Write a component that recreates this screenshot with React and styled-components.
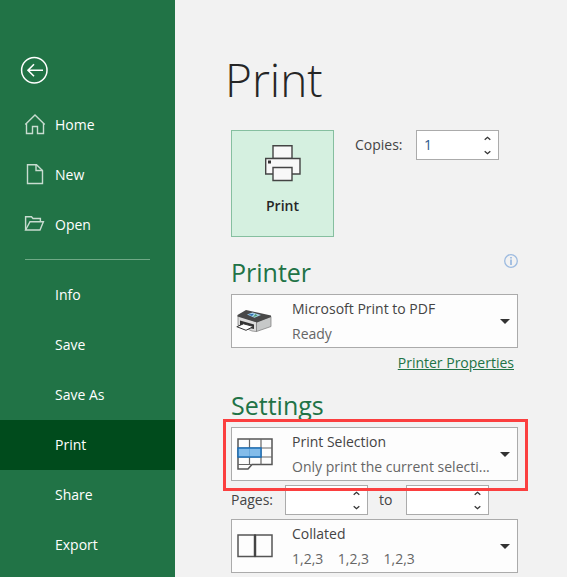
import React, { useState } from 'react';
import styled, { createGlobalStyle } from 'styled-components';

const GlobalStyle = createGlobalStyle`
  * {
    box-sizing: border-box;
  }

  body {
    margin: 0;
    background: #f2f2f2;
    color: #444;
    font-family: 'Segoe UI', 'Open Sans', sans-serif;
    font-size: 14px;
    line-height: 24px;
  }

  button,
  input,
  select {
    font: inherit;
    color: inherit;
  }
`;

const Page = styled.div`
  display: flex;
  min-height: 100vh;
`;

const Sidebar = styled.nav`
  flex: 0 0 175px;
  padding-top: 56px;
  background: #217346;
  color: #fff;
`;

const BackButton = styled.button`
  display: block;
  margin: 0 0 16px 20px;
  padding: 0;
  border: none;
  background: none;
  color: #fff;
  height: 28px;
  cursor: pointer;

  svg {
    display: block;
  }
`;

const NavItem = styled.a`
  display: flex;
  align-items: center;
  height: 50px;
  padding-left: ${({ $plain }) => ($plain ? '55px' : '24px')};
  gap: 9px;
  background: ${({ $active }) => ($active ? '#004b1c' : 'transparent')};
  color: #fff;
  text-decoration: none;
`;

const Divider = styled.hr`
  height: 1px;
  margin: 9px 25px 10px;
  border: none;
  background: #6fa986;
`;

const Main = styled.main`
  flex: 1;
  min-width: 0;
  padding: 44px 49px 4px 56px;
`;

const Title = styled.h1`
  margin: 0 0 16px -6px;
  color: #262626;
  font-size: 46px;
  font-weight: 300;
  line-height: 70px;
`;

const PrintRow = styled.div`
  display: flex;
  align-items: flex-start;
`;

const PrintButton = styled.button`
  display: flex;
  flex-direction: column;
  align-items: center;
  gap: 12px;
  width: 103px;
  height: 107px;
  margin-right: 21px;
  padding: 14px 0 0;
  border: 1px solid #86bfa0;
  background: #d5f0e0;
  color: #262626;
  font-weight: 600;
  cursor: pointer;
`;

const Field = styled.div`
  display: flex;
  align-items: center;
  height: 30px;
`;

const FieldLabel = styled.label`
  width: ${({ $width }) => $width}px;
`;

const SpinBox = styled.div`
  display: flex;
  width: 83px;
  height: 30px;
  border: 1px solid #ababab;
  background: #fff;
`;

const SpinInput = styled.input`
  flex: 1;
  min-width: 0;
  padding: 0 0 0 7px;
  border: none;
  outline: none;
  background: none;
  color: #2b5a8c;
  appearance: textfield;

  &::-webkit-inner-spin-button {
    appearance: none;
    margin: 0;
  }
`;

const SpinButtons = styled.div`
  display: flex;
  flex-direction: column;
  width: 22px;
`;

const SpinButton = styled.button`
  display: flex;
  flex: 1;
  align-items: center;
  justify-content: center;
  padding: 0;
  border: none;
  background: none;
`;

const SectionHeader = styled.div`
  display: flex;
  align-items: flex-start;
  justify-content: space-between;
  margin-top: ${({ $gap }) => $gap}px;
`;

const SectionTitle = styled.h2`
  margin: 0;
  color: #217346;
  font-size: 25px;
  font-weight: 400;
  line-height: 36px;
`;

const InfoButton = styled.button`
  height: 14px;
  padding: 0;
  border: none;
  background: none;

  svg {
    display: block;
  }
`;

const Picker = styled.div`
  display: grid;
  grid-template-columns: 60px 1fr 26px;
  grid-template-rows: 27px 25px;
  height: 54px;
  margin-top: ${({ $gap }) => $gap || 0}px;
  border: 1px solid #ababab;
  background: #fdfdfd;
`;

const PickerIcon = styled.span`
  grid-area: 1 / 1 / 3 / 2;
  align-self: center;
  height: 36px;
  padding-left: 4px;
  pointer-events: none;
`;

const PickerSelect = styled.select`
  grid-area: 1 / 1 / 3 / 4;
  min-width: 0;
  padding: 0 26px 24px 60px;
  border: none;
  outline: none;
  background: none;
  appearance: none;
`;

const PickerNote = styled.span`
  grid-area: 2 / 2 / 3 / 3;
  color: #666;
  white-space: pre;
  pointer-events: none;
`;

const PickerArrow = styled.span`
  grid-area: 1 / 3 / 3 / 4;
  place-self: center start;
  margin-left: 9px;
  border: 5px solid transparent;
  border-top-color: #333;
  border-bottom: none;
  pointer-events: none;
`;

const Highlight = styled.div`
  position: relative;

  &::after {
    content: '';
    position: absolute;
    z-index: 1;
    inset: -8px -10px -10px -8px;
    border: 3px solid #fb3f3f;
    pointer-events: none;
  }
`;

const PagesRow = styled.div`
  display: flex;
  gap: 11px;
  margin: 4px 0;
`;

const LinkRow = styled.div`
  padding: 3px 4px 0 0;
  text-align: right;
`;

const TextLink = styled.a`
  color: #217346;
`;

const BackIcon = () => (
  <svg width="28" height="28" viewBox="0 0 28 28" fill="none" stroke="currentColor">
    <circle cx="14.3" cy="14.3" r="12.7" strokeWidth="1.5" />
    <path d="M23 14.3H8M14 8.3L8 14.3L14 20.3" strokeWidth="1.6" />
  </svg>
);

const HomeIcon = () => (
  <svg width="22" height="22" viewBox="0 0 22 22" fill="none" stroke="#c8dcd0" strokeWidth="1.4">
    <path d="M1.3 10.5L11 1L20.7 10.5" />
    <path d="M2.5 9.5V19.5H8.5V12.5H13.5V19.5H19.5V9.5" />
  </svg>
);

const NewIcon = () => (
  <svg width="22" height="22" viewBox="0 0 22 22" fill="none" stroke="#c8dcd0" strokeWidth="1.4">
    <path d="M3.5 0.7H12.5L18.5 6.5V19.5H3.5Z" />
    <path d="M12 0.7V6.5H18.5" />
  </svg>
);

const OpenIcon = () => (
  <svg width="22" height="22" viewBox="0 0 22 22" fill="none" stroke="#c8dcd0" strokeWidth="1.4">
    <path d="M1.6 16V2.7H7.5L9 4.5H16.4V8" />
    <path d="M1.6 16L6 7.7H19.4L16 16Z" />
  </svg>
);

const PrinterIcon = () => (
  <svg width="36" height="37" viewBox="0 0 36 37" fill="#f8f8f8" stroke="#444" strokeWidth="1.4">
    <path d="M8 0.7H27V13.5H8Z" />
    <path d="M0.7 13.5H35V29H0.7Z" />
    <path d="M8 22.5H27V35.5H8Z" />
    <rect x="3" y="15.5" width="3" height="3" fill="#333" stroke="none" />
  </svg>
);

const DeviceIcon = () => (
  <svg width="37" height="36" viewBox="0 0 37 36">
    <path d="M2 12.5L20.5 18.5V28.5L16 28L2 22Z" fill="#dcdcdc" stroke="#777" strokeWidth="0.7" />
    <path d="M20.5 18.5L35 13.5V23.5L20.5 28.5Z" fill="#c6c8c8" stroke="#777" strokeWidth="0.7" />
    <path d="M1.5 12L10 7L35 12.5V14L21 19.5L1.5 13.5Z" fill="#484848" />
    <path d="M11 11.5L16.5 9.5L25 12L18.5 14.8Z" fill="#a9d3ea" />
    <path d="M12 11.5L16 13L18 10.8Z" fill="#2f6fb0" />
    <path d="M17 14L21.5 12.7L19.5 11Z" fill="#4d9a6b" />
    <path d="M4 17.5L18 21.5V26L4 23Z" fill="#333" />
    <path d="M0.8 23.7L7.5 20.8L17.5 23.5L10 27.3Z" fill="#fff" stroke="#333" strokeWidth="1" />
  </svg>
);

const SelectionIcon = () => (
  <svg width="37" height="36" viewBox="0 0 37 36" fill="none">
    <path d="M2 3H36V28.5H16L12 33H2Z" fill="#fdfdfd" stroke="#555" strokeWidth="1.5" />
    <path d="M2 12H36M2 21H36M2 28.5H16M13.5 3V28.5M25 3V28.5" stroke="#666" strokeWidth="1.2" />
    <rect x="2" y="12" width="23" height="9" fill="#83bcea" stroke="#1b6fb8" strokeWidth="1.5" />
    <path d="M13.5 13V20" stroke="#6aaadd" />
  </svg>
);

const CollatedIcon = () => (
  <svg width="37" height="36" viewBox="0 0 37 36" fill="#fdfdfd" stroke="#555" strokeWidth="1.5">
    <path d="M2 7H18.5V28.5H2Z" />
    <path d="M19.5 7H36V28.5H19.5Z" />
    <path d="M19 6.5V29" stroke="#444" strokeWidth="2" />
  </svg>
);

const InfoIcon = () => (
  <svg width="14" height="14" viewBox="0 0 14 14" fill="none" stroke="#9dbbe0">
    <circle cx="7" cy="7" r="6.3" strokeWidth="1.3" />
    <path d="M7 5.5V11M7 3V4.5" strokeWidth="1.8" />
  </svg>
);

const Chevron = ({ up }) => (
  <svg width="7" height="5" viewBox="0 0 7 5" fill="none" stroke="#333" strokeWidth="1.3">
    <path d={up ? 'M0.7 3.7L3.5 1.3L6.3 3.7' : 'M0.7 1.3L3.5 3.7L6.3 1.3'} />
  </svg>
);

const SpinField = ({ id, label, labelWidth, initial }) => {
  const [value, setValue] = useState(initial);
  const step = (amount) => setValue(Math.max(1, Number(value) + amount));

  return (
    <Field>
      <FieldLabel htmlFor={id} $width={labelWidth}>{label}</FieldLabel>
      <SpinBox>
        <SpinInput id={id} type="number" min="1" value={value} onChange={(e) => setValue(e.target.value)} />
        <SpinButtons>
          <SpinButton type="button" aria-label="Increase" onClick={() => step(1)}><Chevron up /></SpinButton>
          <SpinButton type="button" aria-label="Decrease" onClick={() => step(-1)}><Chevron /></SpinButton>
        </SpinButtons>
      </SpinBox>
    </Field>
  );
};

const OptionPicker = ({ label, icon, value, note, gap }) => (
  <Picker $gap={gap}>
    <PickerIcon>{icon}</PickerIcon>
    <PickerNote>{note}</PickerNote>
    <PickerArrow />
    <PickerSelect aria-label={label}>
      <option>{value}</option>
    </PickerSelect>
  </Picker>
);

const fileItems = [
  { name: 'Home', icon: <HomeIcon /> },
  { name: 'New', icon: <NewIcon /> },
  { name: 'Open', icon: <OpenIcon /> },
];

const actionItems = ['Info', 'Save', 'Save As', 'Print', 'Share', 'Export'];

const App = () => (
  <>
    <GlobalStyle />
    <Page>
      <Sidebar>
        <BackButton type="button" aria-label="Back"><BackIcon /></BackButton>
        {fileItems.map((item) => (
          <NavItem key={item.name} href="#">
            {item.icon}
            {item.name}
          </NavItem>
        ))}
        <Divider />
        {actionItems.map((name) => (
          <NavItem key={name} href="#" $plain $active={name === 'Print'}>{name}</NavItem>
        ))}
      </Sidebar>
      <Main>
        <Title>Print</Title>
        <PrintRow>
          <PrintButton type="button">
            <PrinterIcon />
            Print
          </PrintButton>
          <SpinField id="copies" label="Copies:" labelWidth={61} initial="1" />
        </PrintRow>

        <SectionHeader $gap={17}>
          <SectionTitle>Printer</SectionTitle>
          <InfoButton type="button" aria-label="Printer status"><InfoIcon /></InfoButton>
        </SectionHeader>
        <OptionPicker label="Printer" icon={<DeviceIcon />} value="Microsoft Print to PDF" note="Ready" gap={4} />
        <LinkRow>
          <TextLink href="#">Printer Properties</TextLink>
        </LinkRow>

        <SectionHeader $gap={12}>
          <SectionTitle>Settings</SectionTitle>
        </SectionHeader>
        <Highlight>
          <OptionPicker
            label="Print area"
            icon={<SelectionIcon />}
            value="Print Selection"
            note="Only print the current selecti..."
            gap={4}
          />
        </Highlight>
        <PagesRow>
          <SpinField id="from" label="Pages:" labelWidth={54} initial="" />
          <SpinField id="to" label="to" labelWidth={27} initial="" />
        </PagesRow>
        <OptionPicker label="Collation" icon={<CollatedIcon />} value="Collated" note={'1,2,3    1,2,3    1,2,3'} />
      </Main>
    </Page>
  </>
);

export default App;
